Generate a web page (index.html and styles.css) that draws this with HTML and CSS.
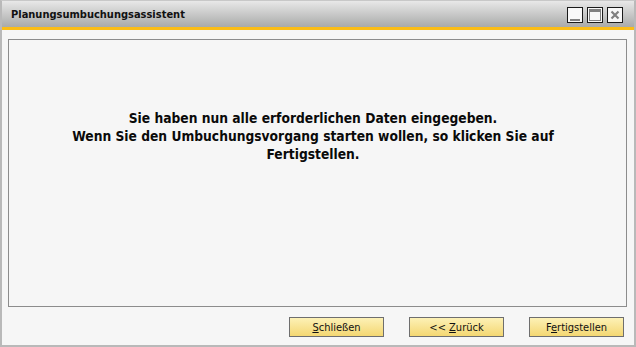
FILE: index.html
```html
<!DOCTYPE html>
<html lang="de">
<head>
<meta charset="UTF-8">
<title>Planungsumbuchungsassistent</title>
<link rel="stylesheet" href="styles.css">
</head>
<body>

<div class="fenster">
  <div class="titelleiste">
    <span class="titel">Planungsumbuchungsassistent</span>
    <div class="fenster-knoepfe">
      <span class="knopf"><svg width="14" height="14" viewBox="0 0 14 14"><rect x="2" y="11" width="10" height="2" fill="#808080"/></svg></span>
      <span class="knopf"><svg width="14" height="14" viewBox="0 0 14 14"><rect x="1.5" y="1.5" width="11" height="11" fill="none" stroke="#808080"/><rect x="1" y="1" width="12" height="3" fill="#808080"/></svg></span>
      <span class="knopf"><svg width="14" height="14" viewBox="0 0 14 14"><path d="M3.5 3.5 L10.5 10.5 M10.5 3.5 L3.5 10.5" stroke="#808080" stroke-width="2.2"/></svg></span>
    </div>
  </div>

  <div class="inhalt">
    <div class="panel">
      <p class="meldung">Sie haben nun alle erforderlichen Daten eingegeben.<br>
      Wenn Sie den Umbuchungsvorgang starten wollen, so klicken Sie auf<br>
      Fertigstellen.</p>
    </div>

    <div class="knopfleiste">
      <button class="btn"><u>S</u>chließen</button>
      <button class="btn">&lt;&lt; <u>Z</u>urück</button>
      <button class="btn">F<u>e</u>rtigstellen</button>
    </div>
  </div>
</div>

</body>
</html>
```

FILE: styles.css
```css
body {
  margin: 0;
  font-family: Tahoma, "DejaVu Sans", Verdana, sans-serif;
  background: #f6f6f6;
}

.fenster {
  width: 636px;
  height: 347px;
  box-sizing: border-box;
  border: 2px solid #b9b9b9;
  border-top: 1px solid #c8c8c8;
  background: #f6f6f6;
  display: flex;
  flex-direction: column;
}

.titelleiste {
  height: 26px;
  background: linear-gradient(#e8e8e8, #a9aaa9);
  border-bottom: 3px solid #fbbd16;
  display: flex;
  align-items: center;
  justify-content: space-between;
  padding: 0 11px 0 9px;
}

.titel {
  font-family: "DejaVu Sans Condensed", "DejaVu Sans", sans-serif;
  font-weight: bold;
  font-size: 11px;
  color: #111;
  padding-top: 1px;
}

.fenster-knoepfe {
  display: flex;
  gap: 4px;
  padding-top: 2px;
}

.knopf {
  width: 14px;
  height: 14px;
  border: 1px solid #1a1a1a;
  background: #f8f8f8;
  display: block;
}

.knopf svg {
  display: block;
}

.inhalt {
  flex: 1;
  padding: 9px 7px 0 6px;
  display: flex;
  flex-direction: column;
}

.panel {
  height: 266px;
  border: 1px solid #8c8c8c;
  background: #f6f6f6;
  text-align: center;
}

.meldung {
  margin: 69px 0 0 -9px;
  font-family: "DejaVu Sans Condensed", "DejaVu Sans", sans-serif;
  font-weight: bold;
  font-size: 13.7px;
  line-height: 18px;
  color: #0a0a0a;
}

.knopfleiste {
  display: flex;
  justify-content: flex-end;
  gap: 25px;
  margin-top: 10px;
  padding-right: 3px;
}

.btn {
  width: 95px;
  height: 20px;
  padding: 0;
  border: 1px solid #6e6e6e;
  background: linear-gradient(#fdf1b6, #f4d772);
  font-family: "DejaVu Sans Condensed", "DejaVu Sans", sans-serif;
  font-size: 11px;
  color: #111;
}
```
